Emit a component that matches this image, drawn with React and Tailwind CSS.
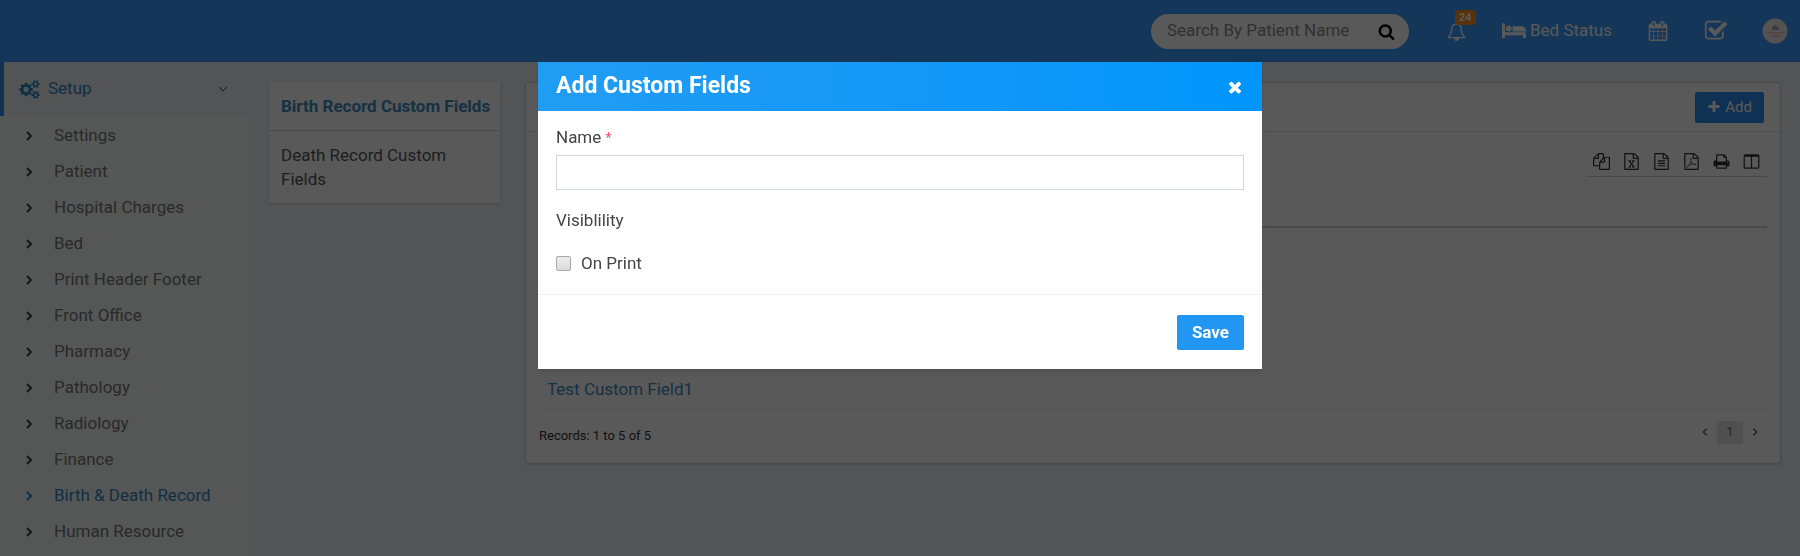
const ICONS = {
  search: 'M1216 832q0-185-131.5-316.5t-316.5-131.5-316.5 131.5-131.5 316.5 131.5 316.5 316.5 131.5 316.5-131.5 131.5-316.5zm512 832q0 52-38 90t-90 38q-54 0-90-38l-343-342q-179 124-399 124-143 0-273.5-55.5t-225-150-150-225-55.5-273.5 55.5-273.5 150-225 225-150 273.5-55.5 273.5 55.5 225 150 150 225 55.5 273.5q0 220-124 399l343 343q37 37 37 90z',
  bell: 'M912 1696q0-16-16-16-59 0-101.5-42.5t-42.5-101.5q0-16-16-16t-16 16q0 73 51.5 124.5t124.5 51.5q16 0 16-16zm-666-288h1300q-266-300-266-832 0-51-24-105t-69-103-121.5-80.5-169.5-31.5-169.5 31.5-121.5 80.5-69 103-24 105q0 532-266 832zm1482 0q0 52-38 90t-90 38h-448q0 106-75 181t-181 75-181-75-75-181h-448q-52 0-90-38t-38-90q50-42 91-88t85-119.5 74.5-158.5 50-206 19.5-260q0-152 117-282.5t307-158.5q-8-19-8-39 0-40 28-68t68-28 68 28 28 68q0 20-8 39 190 28 307 158.5t117 282.5q0 139 19.5 260t50 206 74.5 158.5 85 119.5 91 88z',
  bed: 'M256 960h1728q26 0 45 19t19 45v448h-256v-256h-1536v256h-256v-1216q0-26 19-45t45-19h128q26 0 45 19t19 45v704zm576-320q0-106-75-181t-181-75-181 75-75 181 75 181 181 75 181-75 75-181zm1216 256v-64q0-159-112.5-271.5t-271.5-112.5h-704q-26 0-45 19t-19 45v384h1152z',
  calendar: 'M192 1664h288v-288h-288v288zm352 0h320v-288h-320v288zm-352-352h288v-320h-288v320zm352 0h320v-320h-320v320zm-352-384h288v-288h-288v288zm736 736h320v-288h-320v288zm-384-736h320v-288h-320v288zm768 736h288v-288h-288v288zm-384-352h320v-320h-320v320zm-352-864v-288q0-13-9.5-22.5t-22.5-9.5h-64q-13 0-22.5 9.5t-9.5 22.5v288q0 13 9.5 22.5t22.5 9.5h64q13 0 22.5-9.5t9.5-22.5zm736 864h288v-320h-288v320zm-384-384h320v-288h-320v288zm384 0h288v-288h-288v288zm32-480v-288q0-13-9.5-22.5t-22.5-9.5h-64q-13 0-22.5 9.5t-9.5 22.5v288q0 13 9.5 22.5t22.5 9.5h64q13 0 22.5-9.5t9.5-22.5zm384-64v1280q0 52-38 90t-90 38h-1408q-52 0-90-38t-38-90v-1280q0-52 38-90t90-38h128v-96q0-66 47-113t113-47h64q66 0 113 47t47 113v96h384v-96q0-66 47-113t113-47h64q66 0 113 47t47 113v96h128q52 0 90 38t38 90z',
  check: 'M1472 930v318q0 119-84.5 203.5t-203.5 84.5h-832q-119 0-203.5-84.5t-84.5-203.5v-832q0-119 84.5-203.5t203.5-84.5h832q63 0 117 25 15 7 18 23 3 17-9 29l-49 49q-10 10-23 10-3 0-9-2-23-6-45-6h-832q-66 0-113 47t-47 113v832q0 66 47 113t113 47h832q66 0 113-47t47-113v-254q0-13 9-22l64-64q10-10 23-10 6 0 12 3 20 8 20 29zm231-489l-814 814q-24 24-57 24t-57-24l-430-430q-24-24-24-57t24-57l110-110q24-24 57-24t57 24l263 263 647-647q24-24 57-24t57 24l110 110q24 24 24 57t-24 57z',
  cogs: 'M896 896q0-106-75-181t-181-75-181 75-75 181 75 181 181 75 181-75 75-181zm768 512q0-52-38-90t-90-38-90 38-38 90q0 53 37.5 90.5t90.5 37.5 90.5-37.5 37.5-90.5zm0-1024q0-52-38-90t-90-38-90 38-38 90q0 53 37.5 90.5t90.5 37.5 90.5-37.5 37.5-90.5zm-384 421v185q0 10-7 19.5t-16 10.5l-155 24q-11 35-32 76 34 48 90 115 7 11 7 20 0 12-7 19-23 30-82.5 89.5t-78.5 59.5q-11 0-21-7l-115-90q-37 19-77 31-11 108-23 155-7 24-30 24h-186q-11 0-20-7.5t-10-17.5l-23-153q-34-10-75-31l-118 89q-7 7-20 7-11 0-21-8-144-133-144-160 0-9 7-19 10-14 41-53t47-61q-23-44-35-82l-152-24q-10-1-17-9.5t-7-19.5v-185q0-10 7-19.5t16-10.5l155-24q11-35 32-76-34-48-90-115-7-11-7-20 0-12 7-20 22-30 82-89t79-59q11 0 21 7l115 90q34-18 77-32 11-108 23-154 7-24 30-24h186q11 0 20 7.5t10 17.5l23 153q34 10 75 31l118-89q8-7 20-7 11 0 21 8 144 133 144 160 0 8-7 19-12 16-42 54t-45 60q23 48 34 82l152 23q10 2 17 10.5t7 19.5zm640 533v140q0 16-149 31-12 27-30 52 51 113 51 138 0 4-4 7-122 71-124 71-8 0-46-47t-52-68q-20 2-30 2t-30-2q-14 21-52 68t-46 47q-2 0-124-71-4-3-4-7 0-25 51-138-18-25-30-52-149-15-149-31v-140q0-16 149-31 13-29 30-52-51-113-51-138 0-4 4-7 4-2 35-20t59-34 30-16q8 0 46 46.5t52 67.5q20-2 30-2t30 2q51-71 92-112l6-2q4 0 124 70 4 3 4 7 0 25-51 138 17 23 30 52 149 15 149 31zm0-1024v140q0 16-149 31-12 27-30 52 51 113 51 138 0 4-4 7-122 71-124 71-8 0-46-47t-52-68q-20 2-30 2t-30-2q-14 21-52 68t-46 47q-2 0-124-71-4-3-4-7 0-25 51-138-18-25-30-52-149-15-149-31v-140q0-16 149-31 13-29 30-52-51-113-51-138 0-4 4-7 4-2 35-20t59-34 30-16q8 0 46 46.5t52 67.5q20-2 30-2t30 2q51-71 92-112l6-2q4 0 124 70 4 3 4 7 0 25-51 138 17 23 30 52 149 15 149 31z',
  plus: 'M1600 736v192q0 40-28 68t-68 28h-416v416q0 40-28 68t-68 28h-192q-40 0-68-28t-28-68v-416h-416q-40 0-68-28t-28-68v-192q0-40 28-68t68-28h416v-416q0-40 28-68t68-28h192q40 0 68 28t28 68v416h416q40 0 68 28t28 68z',
  times: 'M1490 1322q0 40-28 68l-136 136q-28 28-68 28t-68-28l-294-294-294 294q-28 28-68 28t-68-28l-136-136q-28-28-28-68t28-68l294-294-294-294q-28-28-28-68t28-68l136-136q28-28 68-28t68 28l294 294 294-294q28-28 68-28t68 28l136 136q28 28 28 68t-28 68l-294 294 294 294q28 28 28 68z',
  copy: 'M1696 384q40 0 68 28t28 68v1216q0 40-28 68t-68 28h-960q-40 0-68-28t-28-68v-288h-544q-40 0-68-28t-28-68v-672q0-40 20-88t48-76l408-408q28-28 76-48t88-20h416q40 0 68 28t28 68v328q68-40 128-40h416zm-544 213l-299 299h299v-299zm-640-384l-299 299h299v-299zm196 647l316-316v-416h-384v416q0 40-28 68t-68 28h-416v640h512v-256q0-40 20-88t48-76zm956 804v-1152h-384v416q0 40-28 68t-68 28h-416v640h896z',
  excel: 'M1596 380q28 28 48 76t20 88v1152q0 40-28 68t-68 28h-1344q-40 0-68-28t-28-68v-1600q0-40 28-68t68-28h896q40 0 88 20t76 48zm-444-244v376h376q-10-29-22-41l-313-313q-12-12-41-22zm384 1528v-1024h-416q-40 0-68-28t-28-68v-416h-768v1536h1280zm-979-234v106h281v-106h-75l103-161q5-7 10-16.5t7.5-13.5 3.5-4h2q1 4 5 10 2 4 4.5 7.5t6 8 6.5 8.5l107 161h-76v106h291v-106h-68l-192-273 195-282h67v-107h-279v107h74l-103 159q-4 7-10 16.5t-9 13.5l-2 3h-2q-1-4-5-10-6-11-17-23l-106-159h76v-107h-290v107h68l189 272-194 283h-68z',
  text: 'M1596 380q28 28 48 76t20 88v1152q0 40-28 68t-68 28h-1344q-40 0-68-28t-28-68v-1600q0-40 28-68t68-28h896q40 0 88 20t76 48zm-444-244v376h376q-10-29-22-41l-313-313q-12-12-41-22zm384 1528v-1024h-416q-40 0-68-28t-28-68v-416h-768v1536h1280zm-1024-864q0-14 9-23t23-9h704q14 0 23 9t9 23v64q0 14-9 23t-23 9h-704q-14 0-23-9t-9-23v-64zm736 224q14 0 23 9t9 23v64q0 14-9 23t-23 9h-704q-14 0-23-9t-9-23v-64q0-14 9-23t23-9h704zm0 256q14 0 23 9t9 23v64q0 14-9 23t-23 9h-704q-14 0-23-9t-9-23v-64q0-14 9-23t23-9h704z',
  pdf: 'M1596 380q28 28 48 76t20 88v1152q0 40-28 68t-68 28h-1344q-40 0-68-28t-28-68v-1600q0-40 28-68t68-28h896q40 0 88 20t76 48zm-444-244v376h376q-10-29-22-41l-313-313q-12-12-41-22zm384 1528v-1024h-416q-40 0-68-28t-28-68v-416h-768v1536h1280zm-514-593q33 26 84 56 59-7 117-7 147 0 177 49 16 22 2 52 0 1-1 2l-2 2v1q-6 38-71 38-48 0-115-20t-130-53q-221 24-392 83-153 262-242 262-15 0-28-7l-24-12q-1-1-6-5-10-10-6-36 9-40 56-91.5t132-96.5q14-9 23 6 2 2 2 4 52-85 107-197 68-136 104-262-24-82-30.5-159.5t6.5-127.5q11-40 42-40h22q23 0 35 15 18 21 9 68-2 6-4 8 1 3 1 8v30q-2 123-14 192 55 164 146 238zm-576 411q52-24 137-158-51 40-87.5 84t-49.5 74zm398-920q-15 42-2 132 1-7 7-44 0-3 7-43 1-4 4-8-1-1-1-2t-1-2-1-3q-1-22-13-36 0 1-1 2v2zm-124 661q135-54 284-81-2-1-13-9.5t-16-13.5q-76-67-127-176-27 86-83 197-30 56-45 83zm646-16q-24-24-140-24 76 28 124 28 14 0 18-1 0-1-2-3z',
  print: 'M448 1536h896v-256h-896v256zm0-640h896v-384h-160q-40 0-68-28t-28-68v-160h-640v640zm1152 64q0-26-19-45t-45-19-45 19-19 45 19 45 45 19 45-19 19-45zm128 0v416q0 13-9.5 22.5t-22.5 9.5h-224v160q0 40-28 68t-68 28h-960q-40 0-68-28t-28-68v-160h-224q-13 0-22.5-9.5t-9.5-22.5v-416q0-79 56.5-135.5t135.5-56.5h64v-544q0-40 28-68t68-28h672q40 0 88 20t76 48l152 152q28 28 48 76t20 88v256h64q79 0 135.5 56.5t56.5 135.5z',
  columns: 'M224 1536h608v-1152h-640v1120q0 13 9.5 22.5t22.5 9.5zm1376-32v-1120h-640v1152h608q13 0 22.5-9.5t9.5-22.5zm128-1216v1216q0 66-47 113t-113 47h-1344q-66 0-113-47t-47-113v-1216q0-66 47-113t113-47h1344q66 0 113 47t47 113z',
};

const MENU = [
  'Settings',
  'Patient',
  'Hospital Charges',
  'Bed',
  'Print Header Footer',
  'Front Office',
  'Pharmacy',
  'Pathology',
  'Radiology',
  'Finance',
  'Birth & Death Record',
  'Human Resource',
];

const EXPORTS = [
  { icon: 'copy',    label: 'Copy' },
  { icon: 'excel',   label: 'Excel' },
  { icon: 'text',    label: 'CSV' },
  { icon: 'pdf',     label: 'PDF' },
  { icon: 'print',   label: 'Print' },
  { icon: 'columns', label: 'Columns' },
];

const Icon = ({ name, width = 1792, className }) => (
  <svg viewBox={`0 0 ${width} 1792`} className={className} fill="currentColor" aria-hidden="true">
    <path d={ICONS[name]} />
  </svg>
);

const Chevron = ({ d, className, weight = 2 }) => (
  <svg viewBox="0 0 10 10" className={className} fill="none" stroke="currentColor" strokeWidth={weight} aria-hidden="true">
    <path d={d} />
  </svg>
);

const RIGHT = 'M3 1l4 4-4 4';
const LEFT = 'M7 1l-4 4 4 4';
const DOWN = 'M1 3l4 4 4-4';

const Header = () => (
  <header className="flex h-[62px] items-center justify-end bg-[#3a9bff] pr-3 text-white">
    <form className="flex h-[35px] w-[258px] items-center rounded-full bg-white pr-3.5 pl-4">
      <input
        type="text"
        aria-label="Search By Patient Name"
        placeholder="Search By Patient Name"
        className="min-w-0 flex-1 bg-transparent text-[17px] text-black outline-none placeholder:text-[#8c8c8c]"
      />
      <button type="button" aria-label="Search" className="text-black">
        <Icon name="search" className="size-[17px]" />
      </button>
    </form>
    <a href="#notifications" aria-label="Notifications" className="relative ml-[38px]">
      <Icon name="bell" className="size-[19px]" />
      <span className="absolute -top-3 left-2 rounded-sm bg-[#ff8f1f] px-1 text-[11px] leading-[15px] font-bold">
        24
      </span>
    </a>
    <a href="#bed-status" className="ml-9 flex items-center gap-1 text-[17px]">
      <Icon name="bed" width={2048} className="h-[21px] w-6" />
      Bed Status
    </a>
    <a href="#calendar" aria-label="Calendar" className="ml-9">
      <Icon name="calendar" className="size-5" />
    </a>
    <a href="#tasks" aria-label="Tasks" className="ml-9">
      <Icon name="check" className="size-6" />
    </a>
    <a href="#profile" aria-label="Profile" className="ml-[34px]">
      <svg viewBox="0 0 26 26" className="size-[26px]" aria-hidden="true">
        <circle cx="13" cy="13" r="12.5" fill="#f1eaea" />
        <path d="M10 12q0-4 3-5 3 1 4 5z" fill="#aaa3a6" />
        <path d="M5 15h16M8 18h10" stroke="#c9b2b5" strokeWidth="1" />
      </svg>
    </a>
  </header>
);

const Sidebar = () => (
  <nav className="w-[250px] shrink-0 bg-[#f4f8f6] text-[17px] text-[#777]">
    <a
      href="#setup"
      className="flex h-[54px] items-center gap-2 border-l-4 border-[#2a8cf0] bg-[#ecf0f5] pr-[22px] pl-[15px] text-[#2f86c4]"
    >
      <Icon name="cogs" width={1920} className="h-[19px] w-[21px]" />
      <span className="flex-1">Setup</span>
      <Chevron d={DOWN} weight={1} className="size-2.5 text-[#444]" />
    </a>
    <ul className="pt-0.5">
      {MENU.map((item) => (
        <li key={item}>
          <a
            href="#menu"
            className={`flex h-9 items-center gap-5 pl-6 ${item === 'Birth & Death Record' ? 'text-[#2f86c4]' : ''}`}
          >
            <Chevron
              d={RIGHT}
              className={`size-2.5 ${item === 'Birth & Death Record' ? '' : 'text-[#444]'}`}
            />
            {item}
          </a>
        </li>
      ))}
    </ul>
  </nav>
);

const RecordTabs = () => (
  <ul className="w-[231px] shrink-0 self-start bg-white text-[17px] leading-6 text-[#555] shadow-sm">
    <li className="border-b border-[#d5dae0]">
      <a href="#birth" className="block px-3 py-3 font-bold whitespace-nowrap text-[#3c8dbc]">
        Birth Record Custom Fields
      </a>
    </li>
    <li>
      <a href="#death" className="block px-3 py-3">
        Death Record Custom Fields
      </a>
    </li>
  </ul>
);

const FieldsCard = () => (
  <section className="min-w-0 flex-1 self-start rounded border border-[#d0d4da] bg-white shadow-sm">
    <div className="flex h-[49px] items-center justify-end border-b border-[#e2e2e2] px-4">
      <button type="button" className="flex h-[31px] items-center gap-1 rounded-xs bg-[#2a8cf0] px-3 text-[15px] text-white">
        <Icon name="plus" className="size-[14px]" />
        Add
      </button>
    </div>
    <div className="px-[13px] pt-4">
      <div className="flex justify-end">
        <div className="flex gap-[13px] border-b border-[#cfcfcf] px-[7px] pb-0.5 text-[#333]">
          {EXPORTS.map(({ icon, label }) => (
            <button key={icon} type="button" aria-label={label} className="flex h-[26px] items-center">
              <Icon name={icon} className="size-[17px]" />
            </button>
          ))}
        </div>
      </div>
      <table className="mt-[49px] ml-[5px] w-[calc(100%-5px)] border-t-2 border-[#d5d5d5] text-[17px]">
        <tbody>
          <tr className="border-b border-[#ededed]">
            <td className="h-[182px] pb-1.5 pl-[3px] align-bottom">
              <a href="#field" className="text-[#3c8dbc]">Test Custom Field1</a>
            </td>
          </tr>
        </tbody>
      </table>
      <div className="flex h-[53px] items-center justify-between text-[13px] text-[#333]">
        <p>Records: 1 to 5 of 5</p>
        <div className="flex items-center gap-2 pr-2 pb-2 text-[#666]">
          <button type="button" aria-label="Previous page">
            <Chevron d={LEFT} className="size-2" />
          </button>
          <button type="button" className="h-[23px] w-[26px] bg-[#e6e6e6]">1</button>
          <button type="button" aria-label="Next page">
            <Chevron d={RIGHT} className="size-2" />
          </button>
        </div>
      </div>
    </div>
  </section>
);

const AddFieldModal = () => (
  <div className="fixed inset-0 flex items-start justify-center bg-black/65 pt-[62px]">
    <div role="dialog" aria-labelledby="modal-title" className="w-full max-w-[724px] bg-white text-[17px] text-[#444] shadow-md">
      <div className="flex h-[49px] items-center justify-between bg-linear-to-r from-[#219cf3] to-[#0095fb] px-[18px] text-white">
        <h4 id="modal-title" className="text-[23px] font-bold">Add Custom Fields</h4>
        <button type="button" aria-label="Close">
          <Icon name="times" className="size-[18px]" />
        </button>
      </div>
      <form>
        <div className="px-[18px] pt-3.5 pb-[19px]">
          <label htmlFor="field-name" className="block leading-6">
            Name <span className="text-sm text-[#f0506e]">*</span>
          </label>
          <input
            id="field-name"
            type="text"
            className="mt-1.5 block h-[35px] w-full border border-[#d2d6de] px-3 outline-none"
          />
          <p className="mt-[18px] leading-6">Visiblility</p>
          <label className="mt-[19px] flex items-center gap-2.5 leading-6">
            <input
              type="checkbox"
              className="size-[15px] appearance-none rounded-xs border border-[#a9a9a9] bg-linear-to-b from-[#ececec] to-[#dcdcdc]"
            />
            On Print
          </label>
        </div>
        <div className="flex justify-end border-t border-[#f0f0f0] px-[18px] pt-5 pb-[19px]">
          <button type="submit" className="h-[35px] rounded-xs bg-[#2196f3] px-[15px] font-bold text-white">
            Save
          </button>
        </div>
      </form>
    </div>
  </div>
);

const App = () => (
  <div className="flex min-h-screen flex-col bg-[#ecf0f5] font-['Roboto','Liberation_Sans',sans-serif]">
    <Header />
    <div className="flex flex-1">
      <Sidebar />
      <main className="flex min-w-0 flex-1 gap-[25px] pt-5 pr-[19px] pl-[19px]">
        <RecordTabs />
        <FieldsCard />
      </main>
    </div>
    <AddFieldModal />
  </div>
);

export default App;
